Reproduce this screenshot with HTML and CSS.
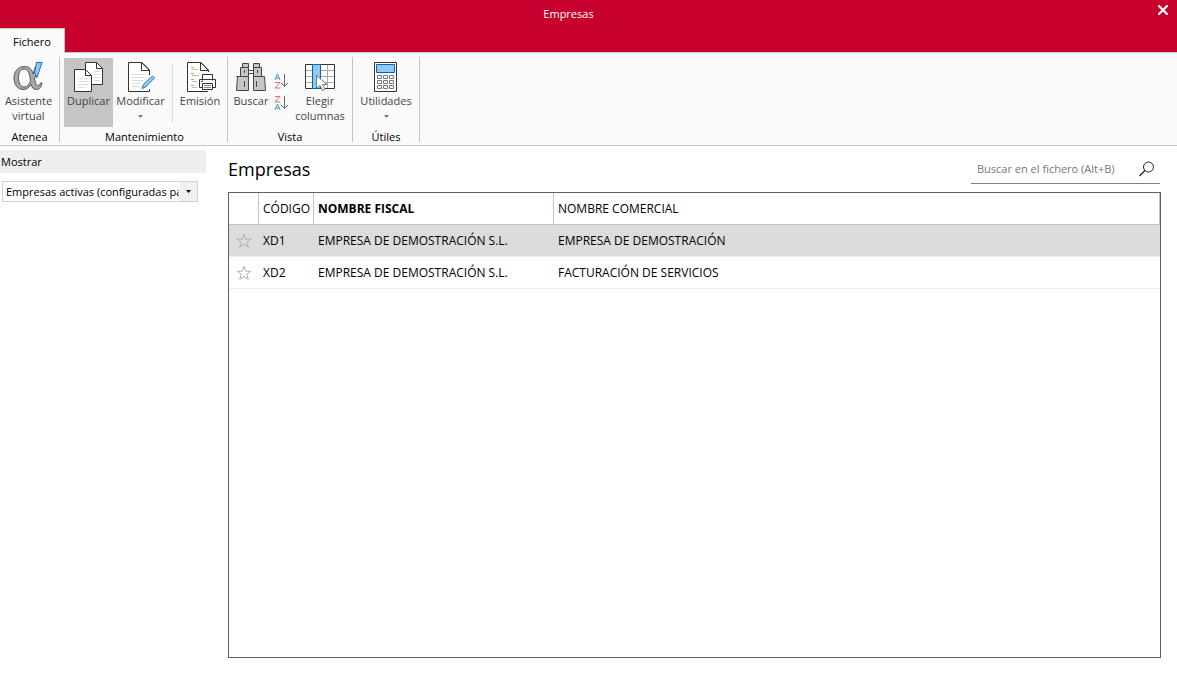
FILE: index.html
```html
<!DOCTYPE html>
<html lang="es">
<head>
<meta charset="utf-8">
<title>Empresas</title>
<link rel="stylesheet" href="styles.css">
</head>
<body>
<header class="titlebar">
  <h1 class="window-title">Empresas</h1>
  <button class="close" type="button" aria-label="Cerrar">
    <svg width="10" height="10" viewBox="0 0 10 10"><path d="M1 1l8 8M9 1L1 9" stroke="#fff" stroke-width="2.2" stroke-linecap="square"/></svg>
  </button>
  <nav class="tabs"><button class="tab" type="button">Fichero</button></nav>
</header>

<div class="ribbon">
  <section class="group group-atenea">
    <div class="tools">
      <button class="tool" type="button">
        <svg class="icon" width="32" height="32" viewBox="0 0 32 32" fill="none">
          <g fill="#a9a9a9" stroke="#555">
            <path fill-rule="evenodd" d="M11.500 7.500c5 0 7.500 3 8.500 7.500l2.500-7.500h3.500c-1 4.500-2.500 8.500-4.500 11.500.5 4 1.500 7.500 3.500 7.500 1.300 0 2-.7 2.500-2.500h1.500c-.5 4-2.500 6.500-5.500 6.500s-4.500-2-5.500-5c-2 3.300-4.500 5-8 5-5 0-9-4.500-9-11.500 0-7 4.500-11.500 10.500-11.500zM11 10c-3.500 0-5.500 3.500-5.500 8.500 0 5.500 2 9.500 5.500 9.500s5.500-3 6.500-6.500C16.800 14.500 15 10 11 10z"/>
          </g>
          <path d="M23.500 3.500H29L24 18.500l-2.500-5z" fill="#90c8f0" stroke="#1b6fb5"/>
        </svg>
        <span>Asistente<br>virtual</span>
      </button>
    </div>
    <h2 class="group-name">Atenea</h2>
  </section>

  <section class="group group-mant">
    <div class="tools">
      <button class="tool active" type="button">
        <svg class="icon" width="32" height="32" viewBox="0 0 32 32" fill="#fff">
          <path d="M12.500 3.500h11l6 6v16h-17z" stroke="#333"/>
          <path d="M23.500 3.500v6h6z" stroke="#333"/>
          <path d="M21 12.500h6M21 15.500h6M21 18.500h6M21 21.500h6" stroke="#ddd"/>
          <path d="M1.500 10.500h11l6 6v16h-17z" stroke="#333"/>
          <path d="M12.500 10.500v6h6z" stroke="#333"/>
          <path d="M5 19.500h10M5 22.500h10M5 25.500h10M5 28.500h7" stroke="#ddd"/>
        </svg>
        <span>Duplicar</span>
      </button>
      <button class="tool tool-mod" type="button">
        <svg class="icon" width="32" height="32" viewBox="0 0 32 32" fill="#fff">
          <path d="M24.500 16V11l-7.500-7.500H3.500v29h21V30" stroke="#333"/>
          <path d="M16.500 3.500v8h8z" stroke="#333"/>
          <path d="M7 15.500h13M7 18.500h13M7 21.500h11M7 24.500h9M7 27.500h8" stroke="#ddd"/>
          <path d="M17 29.500l1.500-4 9-8.500 2 2-9 9z" fill="#9bcdf1" stroke="#1976bd"/>
        </svg>
        <span>Modificar</span>
        <svg class="caret" width="5" height="3" viewBox="0 0 5 3"><path d="M0 0h5L2.500 3z" fill="#777"/></svg>
      </button>
      <div class="divider"></div>
      <button class="tool" type="button">
        <svg class="icon" width="32" height="32" viewBox="0 0 32 32" fill="none">
          <path d="M24 32.500H3.500v-29H17l7.500 7.500v2" fill="#fff" stroke="#333"/>
          <path d="M16.500 3.500v8h8z" fill="#fff" stroke="#333"/>
          <path d="M7 8.500h3M7 14.500h3M7 20.500h3M7 26.500h3" stroke="#f0a020"/>
          <path d="M8 10.500h6M8 16.500h7M8 22.500h5M8 28.500h5" stroke="#bbb"/>
          <path d="M18.500 21.500v-6h10v6M19 28.500h-3.500v-8h16v8H28" fill="#fff" stroke="#333"/>
          <path d="M18.500 24.500h10v6h-10z" fill="#fff" stroke="#333"/>
          <path d="M20 26.500h7M20 28.500h7" stroke="#888"/><path d="M17 22.500h2" stroke="#1976bd"/>
        </svg>
        <span>Emisión</span>
      </button>
    </div>
    <h2 class="group-name">Mantenimiento</h2>
  </section>

  <section class="group group-vista">
    <div class="tools">
      <button class="tool" type="button">
        <svg class="icon" width="32" height="32" viewBox="0 0 32 32" fill="#c6c6c6" stroke="#444">
          <path d="M13 11.500h6v3h-6z" fill="#fff"/>
          <path d="M7.500 4.500h6v4h-6zM18.500 4.500h6v4h-6zM5.500 8.500h8v9h-8zM18.500 8.500h8v9h-8zM1.500 17.500h12v14h-12l1-14zM18.500 17.500h11l1 14h-12z"/>
          <path d="M9.500 22v6M21.500 22v6M9.500 11v3M22.500 11v3"/>
        </svg>
        <span>Buscar</span>
      </button>
      <div class="sorts">
        <button class="sort" type="button" aria-label="Orden ascendente">
          <svg width="16" height="16" viewBox="0 0 16 16" fill="none"><path d="M1 7L3.500 .8 6 7M2 5h3" stroke="#3b96d2"/><path d="M1 9.500h5l-5 5.500h5.500" stroke="#ef6b70"/><path d="M10.500 1v12M7 10l3.500 3.500L14 10" stroke="#666"/></svg>
        </button>
        <button class="sort" type="button" aria-label="Orden descendente">
          <svg width="16" height="16" viewBox="0 0 16 16" fill="none"><path d="M1 1.500h5l-5 5.500h5.500" stroke="#ef6b70"/><path d="M1 15L3.500 9l2.500 6M2 13h3" stroke="#3b96d2"/><path d="M10.500 1v12M7 10l3.500 3.500L14 10" stroke="#666"/></svg>
        </button>
      </div>
      <button class="tool" type="button">
        <svg class="icon" width="32" height="32" viewBox="0 0 32 32" fill="none">
          <path d="M1.500 5.500h29v24h-29z" fill="#fff" stroke="#333"/>
          <path d="M2 11.500h28M2 17.500h28M2 23.500h28M23.500 6v23" stroke="#aaa"/>
          <path d="M8.500 5.500h8v24h-8z" fill="#90c8f0" stroke="#0864b0"/>
          <path d="M12.500 16.500v13l3.500-3 2.500 5 2.500-1.500-2.500-4.500h4.500z" fill="#fff" stroke="#777"/>
        </svg>
        <span>Elegir<br>columnas</span>
      </button>
    </div>
    <h2 class="group-name">Vista</h2>
  </section>

  <section class="group group-utiles">
    <div class="tools">
      <button class="tool" type="button">
        <svg class="icon" width="32" height="32" viewBox="0 0 32 32" fill="none">
          <path d="M4.500 3.500h22v29h-22z" fill="#fff" stroke="#333"/>
          <path d="M6.500 5.500h18v8h-18z" fill="#90c8f0" stroke="#0864b0"/>
          <path d="M7.500 16.500h4v3h-4zM13.500 16.500h4v3h-4zM19.500 16.500h4v3h-4zM7.500 21.500h4v3h-4zM13.500 21.500h4v3h-4zM19.500 21.500h4v3h-4zM7.500 26.500h4v3h-4zM13.500 26.500h4v3h-4zM19.500 26.500h4v3h-4z" stroke="#777"/>
        </svg>
        <span>Utilidades</span>
        <svg class="caret" width="5" height="3" viewBox="0 0 5 3"><path d="M0 0h5L2.500 3z" fill="#777"/></svg>
      </button>
    </div>
    <h2 class="group-name">Útiles</h2>
  </section>
</div>

<div class="body">
  <aside class="sidebar">
    <label class="side-title" for="mostrar">Mostrar</label>
    <div class="select-box">
      <select class="select" id="mostrar"><option>Empresas activas (configuradas para</option></select>
      <span class="select-arrow"><svg width="5" height="3" viewBox="0 0 5 3"><path d="M0 0h5L2.500 3z"/></svg></span>
    </div>
  </aside>
  <main class="content">
    <div class="content-head">
      <h2 class="title">Empresas</h2>
      <div class="search">
        <input class="search-input" type="text" placeholder="Buscar en el fichero (Alt+B)" aria-label="Buscar en el fichero">
        <button class="search-btn" type="button" aria-label="Buscar"><svg width="16" height="16" viewBox="0 0 16 16" fill="none" stroke="#222"><circle cx="9.500" cy="6" r="5"/><path d="M6 9.500L.5 15" stroke-width="1.300"/></svg></button>
      </div>
    </div>
    <div class="grid">
      <table class="table">
        <colgroup><col class="c-star"><col class="c-code"><col class="c-fiscal"><col></colgroup>
        <thead><tr><th></th><th>CÓDIGO</th><th class="sorted">NOMBRE FISCAL</th><th>NOMBRE COMERCIAL</th></tr></thead>
        <tbody>
          <tr class="selected"><td class="star"><svg width="16" height="16" viewBox="0 0 16 16"><path d="M8 1.300l1.700 4.900h5.100l-4.100 3 1.600 5L8 11.200l-4.300 3 1.600-5-4.100-3h5.100z"/></svg></td><td>XD1</td><td>EMPRESA DE DEMOSTRACIÓN S.L.</td><td>EMPRESA DE DEMOSTRACIÓN</td></tr>
          <tr><td class="star"><svg width="16" height="16" viewBox="0 0 16 16"><path d="M8 1.300l1.700 4.900h5.100l-4.100 3 1.600 5L8 11.200l-4.300 3 1.600-5-4.100-3h5.100z"/></svg></td><td>XD2</td><td>EMPRESA DE DEMOSTRACIÓN S.L.</td><td>FACTURACIÓN DE SERVICIOS</td></tr>
        </tbody>
      </table>
    </div>
  </main>
</div>
</body>
</html>
```
FILE: styles.css
```css
* { box-sizing: border-box; }
body {
  margin: 0;
  min-height: 100vh;
  display: flex;
  flex-direction: column;
  background: #fff;
  color: #000;
  font: 11px/15px "Open Sans", "Noto Sans", sans-serif;
}
button, input, select { font: inherit; color: inherit; border: 0; padding: 0; margin: 0; background: none; }
h1, h2 { margin: 0; font-weight: 400; }

.titlebar {
  display: grid;
  grid-template-columns: 1fr 40px;
  grid-template-rows: 28px 24px;
  background: #c8002d;
}
.window-title { color: #fff; font-size: 11px; line-height: 28px; text-align: center; }
.close { display: flex; align-items: center; justify-content: center; height: 20px; padding-left: 12px; }
.tabs { display: flex; }
.tab { width: 65px; height: 25px; background: #fafafa; border-top: 1px solid #c4c4c4; border-right: 1px solid #c4c4c4; z-index: 1; }

.ribbon {
  display: flex;
  padding: 4px 0 3px;
  background: #fafafa;
  border-top: 1px solid #c4c4c4;
  border-bottom: 1px solid #c4c4c4;
}
.group { display: flex; flex-direction: column; gap: 5px; padding-top: 1px; border-right: 1px solid #c4c4c4; }
.group-name { font-size: 11px; line-height: 10px; text-align: center; }
.tools { display: flex; height: 69px; color: #444; }
.group-atenea { width: 60px; }
.group-mant { width: 168px; padding-left: 4px; }
.group-mant .group-name { padding-right: 2px; }
.group-vista { width: 125px; }
.group-utiles { width: 67px; }
.tool { display: flex; flex-direction: column; align-items: center; flex: 1; }
.group-atenea .tool { flex: 0 0 57px; }
.tool span { margin-top: 2px; }
.icon { flex: none; display: block; margin-top: 1px; overflow: visible; }
.active { flex: 0 0 49px; background: #c5c5c5; }
.tool-mod { flex: 0 0 55px; }
.caret { margin-top: 7px; }
.divider { width: 1px; height: 60px; margin: 5px 0 0 4px; background: #dcdcdc; }
.group-vista .tool { flex: 0 0 46px; }
.group-vista .tool:last-child { flex-basis: 60px; }
.sorts { display: flex; flex-direction: column; gap: 6px; width: 16px; padding-top: 15px; }
.sort { height: 16px; }
.sort svg { display: block; }

.body { flex: 1; display: flex; gap: 22px; padding: 4px 16px 25px 0; }
.sidebar { flex: 0 0 206px; }
.side-title { display: block; height: 23px; padding-left: 1px; line-height: 23px; background: #eee; }
.select-box { display: grid; grid-template-columns: 1fr 17px; height: 21px; margin: 8px 8px 0 2px; border: 1px solid #d0d0d0; }
.select { grid-area: 1 / 1 / 2 / 3; appearance: none; width: 100%; padding: 0 18px 0 3px; }
.select-arrow { grid-area: 1 / 2; display: flex; align-items: center; justify-content: center; background: #f0f0f0; pointer-events: none; }

.content { flex: 1; min-width: 0; display: flex; flex-direction: column; gap: 8px; }
.content-head { display: flex; justify-content: space-between; padding: 4px 1px 0 0; }
.title { font-size: 18px; line-height: 30px; }
.search { display: flex; align-items: center; width: 189px; height: 30px; border-bottom: 1px solid #808080; padding: 0 5px 0 6px; }
.search-input { flex: 1; min-width: 0; outline: 0; }
.search-input::placeholder { color: #777; opacity: 1; }
.search-btn svg { display: block; }

.grid { flex: 1; border: 1px solid #606060; }
.table { width: 100%; table-layout: fixed; border-collapse: separate; border-spacing: 0; font-size: 12px; }
.c-star { width: 30px; }
.c-code { width: 55px; }
.c-fiscal { width: 240px; }
.table th, .table td { height: 32px; padding: 0 0 0 4px; text-align: left; font-weight: 400; white-space: nowrap; }
.table th { border-right: 1px solid #c4c4c4; border-bottom: 1px solid #c4c4c4; }
.table .sorted { font-weight: 700; }
.table td { border-bottom: 1px solid #ececec; }
.selected { background: #dcdcdc; }
.table .star { padding-left: 7px; }
.star svg { display: block; fill: none; stroke: #b0b0b0; }
```
